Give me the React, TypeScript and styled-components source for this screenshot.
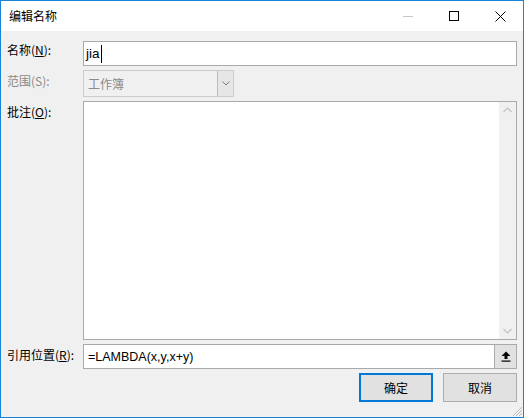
import React from "react";
import styled, { createGlobalStyle } from "styled-components";

const Global = createGlobalStyle`
  html, body { margin: 0; padding: 0; background: #ffffff; }
  body { font-family: "Noto Sans CJK SC", "Liberation Sans", sans-serif; }
  * { box-sizing: border-box; }
`;

const Window = styled.div`
  position: relative;
  width: 524px;
  height: 418px;
  border: 1px solid #1883d7;
  display: flex;
  flex-direction: column;
  background: #f0f0f0;
  overflow: hidden;
`;

const TitleBar = styled.div`
  height: 30px;
  background: #ffffff;
  display: flex;
  align-items: center;
  flex-shrink: 0;
`;

const Title = styled.div`
  flex: 1;
  padding-left: 8px;
  font-size: 12px;
  line-height: 16px;
  color: #000;
`;

const CaptionButton = styled.div`
  width: 46px;
  height: 30px;
  display: flex;
  align-items: center;
  justify-content: center;
`;

const Body = styled.div`
  flex: 1;
  display: grid;
  grid-template-columns: 76px 434px;
  grid-template-rows: 25px 27px 239px 25px 29px;
  row-gap: 4px;
  padding: 10px 6px 10px 6px;
  align-content: start;
`;

const Label = styled.div<{ $offset?: number; $disabled?: boolean }>`
  align-self: start;
  padding-top: ${(p) => p.$offset ?? 2}px;
  font-size: 12px;
  line-height: 16px;
  color: ${(p) => (p.$disabled ? "#8a8a8a" : "#000")};
  white-space: nowrap;
  u { text-decoration: underline; text-underline-offset: 1px; }
`;

const TextBox = styled.div`
  border: 1px solid #a9a9a9;
  background: #fff;
  display: flex;
  align-items: center;
  padding-left: 2px;
  font-family: "Liberation Sans", "Noto Sans CJK SC", sans-serif;
  font-size: 13.5px;
  color: #000;
`;

const Caret = styled.span`
  display: inline-block;
  width: 1px;
  height: 18px;
  background: #000;
  margin-left: 1px;
`;

const SelectBox = styled.div`
  width: 151px;
  border: 1px solid #cccccc;
  background: #f0f0f0;
  display: flex;
  align-items: stretch;
`;

const SelectText = styled.div`
  flex: 1;
  display: flex;
  align-items: center;
  padding-left: 4px;
  font-size: 12px;
  color: #8a8a8a;
`;

const DropButton = styled.div`
  width: 16px;
  background: #e6e6e6;
  border-left: 1px solid #bdbdbd;
  display: flex;
  align-items: center;
  justify-content: center;
`;

const TextArea = styled.div`
  border: 1px solid #a9a9a9;
  background: #fff;
  display: flex;
  justify-content: flex-end;
`;

const ScrollBar = styled.div`
  width: 17px;
  background: #f0f0f0;
  display: flex;
  flex-direction: column;
  justify-content: space-between;
  align-items: center;
  padding: 5px 0;
`;

const RefBox = styled(TextBox)`
  padding-left: 4px;
  padding-right: 0;
  justify-content: space-between;
  font-size: 12.5px;
`;

const RefButton = styled.div`
  width: 22px;
  align-self: stretch;
  background: #e1e1e1;
  border-left: 1px solid #adadad;
  display: flex;
  align-items: center;
  justify-content: center;
`;

const ButtonRow = styled.div`
  grid-column: 1 / span 2;
  display: flex;
  justify-content: flex-end;
  gap: 10px;
  padding-right: 0;
`;

const Button = styled.div<{ $primary?: boolean }>`
  width: 74px;
  height: 29px;
  background: #e1e1e1;
  border: ${(p) => (p.$primary ? "2px solid #0078d7" : "1px solid #adadad")};
  display: flex;
  align-items: center;
  justify-content: center;
  font-size: 12px;
  color: #000;
`;

const Grip = styled.svg`
  position: absolute;
  right: 0;
  bottom: 0;
`;

export default function App() {
  return (
    <>
      <Global />
      <Window>
        <TitleBar>
          <Title>编辑名称</Title>
          <CaptionButton>
            <svg width="10" height="10" viewBox="0 0 10 10">
              <line x1="0" y1="5.5" x2="10" y2="5.5" stroke="#c8c8c8" strokeWidth="1" />
            </svg>
          </CaptionButton>
          <CaptionButton>
            <svg width="10" height="10" viewBox="0 0 10 10">
              <rect x="0.5" y="0.5" width="9" height="9" fill="none" stroke="#000" strokeWidth="1" />
            </svg>
          </CaptionButton>
          <CaptionButton>
            <svg width="11" height="11" viewBox="0 0 11 11">
              <path d="M0.5 0.5 L10.5 10.5 M10.5 0.5 L0.5 10.5" stroke="#000" strokeWidth="1" />
            </svg>
          </CaptionButton>
        </TitleBar>
        <Body>
          <Label $offset={1}>
            名称(<u>N</u>):
          </Label>
          <TextBox>
            jia
            <Caret />
          </TextBox>

          <Label $disabled $offset={3}>
            范围(S):
          </Label>
          <SelectBox>
            <SelectText>工作簿</SelectText>
            <DropButton>
              <svg width="8" height="5" viewBox="0 0 8 5">
                <path d="M0.5 0.5 L4 4 L7.5 0.5" fill="none" stroke="#7a7a7a" strokeWidth="1" />
              </svg>
            </DropButton>
          </SelectBox>

          <Label $offset={3}>
            批注(<u>O</u>):
          </Label>
          <TextArea>
            <ScrollBar>
              <svg width="9" height="6" viewBox="0 0 9 6">
                <path d="M0.5 5 L4.5 1 L8.5 5" fill="none" stroke="#c2c2c2" strokeWidth="1.2" />
              </svg>
              <svg width="9" height="6" viewBox="0 0 9 6">
                <path d="M0.5 1 L4.5 5 L8.5 1" fill="none" stroke="#c2c2c2" strokeWidth="1.2" />
              </svg>
            </ScrollBar>
          </TextArea>

          <Label $offset={3}>
            引用位置(<u>R</u>):
          </Label>
          <RefBox>
            <span>=LAMBDA(x,y,x+y)</span>
            <RefButton>
              <svg width="10" height="11" viewBox="0 0 10 11">
                <path d="M5 0.5 L9.5 5 L6.5 5 L6.5 8 L3.5 8 L3.5 5 L0.5 5 Z" fill="#000" />
                <rect x="0.5" y="9.5" width="9" height="1.2" fill="#000" />
              </svg>
            </RefButton>
          </RefBox>

          <ButtonRow>
            <Button $primary>确定</Button>
            <Button>取消</Button>
          </ButtonRow>
        </Body>
        <Grip width="10" height="10" viewBox="0 0 10 10">
          <path d="M9 3 L3 9 M9 6 L6 9 M9 0 L0 9" stroke="#bcbcbc" strokeWidth="1" />
        </Grip>
      </Window>
    </>
  );
}
